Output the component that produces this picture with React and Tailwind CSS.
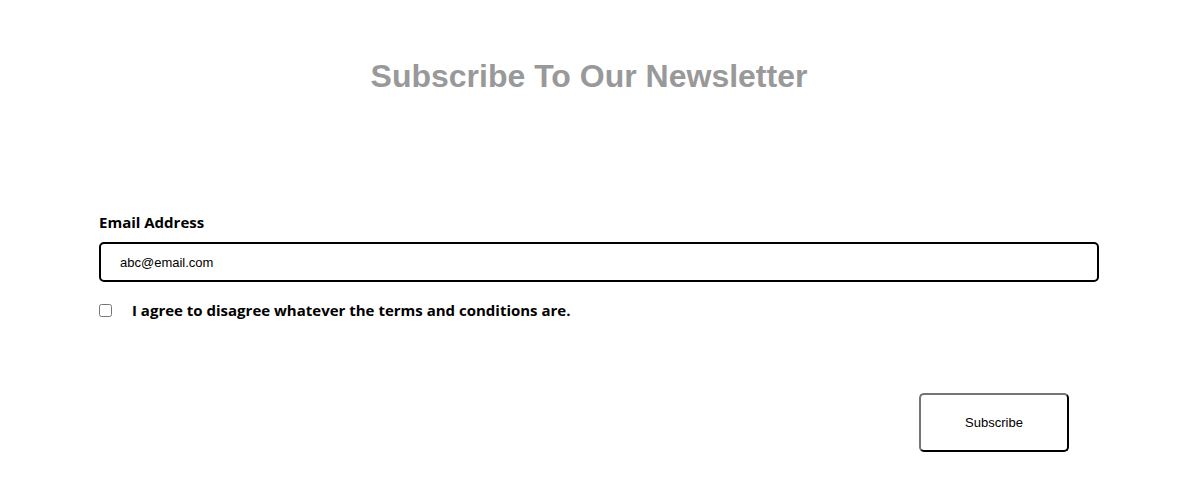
export default function App() {
  return (
    <div className="w-[1178px] h-[495px] bg-white flex flex-col">
      <h1 className="mt-[56px] text-center text-[32px] leading-[40px] font-bold text-[#999999] font-['Liberation_Sans',Arial,sans-serif]">
        Subscribe To Our Newsletter
      </h1>

      <form className="mt-[116px] px-[99px] flex flex-col" onSubmit={(e) => e.preventDefault()}>
        <label className="text-[15px] leading-[20px] font-bold text-black font-['Open_Sans','Noto_Sans',sans-serif]">
          Email Address
        </label>
        <input
          type="email"
          defaultValue="abc@email.com"
          className="mt-[10px] w-[1000px] h-[40px] border-2 border-black rounded-[5px] pl-[19px] text-[13px] text-black font-['Liberation_Sans',Arial,sans-serif] outline-none"
        />

        <div className="mt-[18px] flex items-center">
          <input type="checkbox" className="w-[13px] h-[13px] m-0 accent-gray-500" />
          <span className="ml-[20px] text-[15px] leading-[20px] font-bold text-black font-['Open_Sans','Noto_Sans',sans-serif]">
            I agree to disagree whatever the terms and conditions are.
          </span>
        </div>

        <div className="mt-[73px] flex justify-end pr-[10px]">
          <button
            type="submit"
            className="w-[150px] h-[59px] bg-white border-2 border-t-[#767670] border-l-[#767670] border-r-black border-b-black rounded-[5px] text-[13px] text-black font-['Liberation_Sans',Arial,sans-serif]"
          >
            Subscribe
          </button>
        </div>
      </form>
    </div>
  );
}
